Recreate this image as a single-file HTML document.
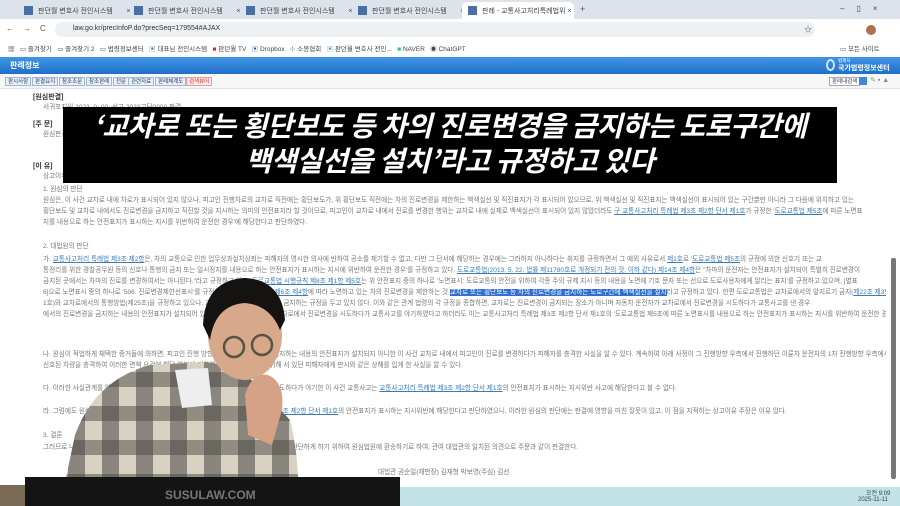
<!DOCTYPE html>
<html><head><meta charset="utf-8"><style>
*{margin:0;padding:0;box-sizing:border-box}
body{width:900px;height:506px;overflow:hidden;position:relative;background:#fff;font-family:"Liberation Sans","Noto Sans CJK KR",sans-serif}
.a{position:absolute}
.t{font-size:6.6px;color:#777;white-space:nowrap;line-height:8px}
.u{color:#3a7bb8;text-decoration:underline}
.h{font-size:7px;color:#333;font-weight:bold}
.tab{position:absolute;top:2px;height:16px;font-size:7px;color:#444;padding:4px 0 0 20px;white-space:nowrap}
.tab:before{content:"";position:absolute;left:6px;top:4px;width:9px;height:9px;background:#4a6fa5}
.bm{font-size:6.5px;color:#444;position:absolute;top:43px;white-space:nowrap}
.btn{position:absolute;top:77px;height:9px;border:1px solid #9bb8d8;background:#e8f0f9;font-size:5.5px;color:#335;padding:0 2px;line-height:8px}
#c{position:absolute;left:0;top:89px;width:886px;height:400px;overflow:hidden}
</style></head><body>
<!-- tabs -->
<div class="a" style="left:0;top:0;width:900px;height:19px;background:#dde3ea"></div>
<div class="tab" style="left:18px">판던월 변호사 전인시스템 &nbsp;&nbsp;&nbsp;&nbsp;&nbsp;&nbsp;×</div>
<div class="tab" style="left:128px">판던월 변호사 전인시스템 &nbsp;&nbsp;&nbsp;&nbsp;&nbsp;&nbsp;×</div>
<div class="tab" style="left:240px">판던월 변호사 전인시스템 &nbsp;&nbsp;&nbsp;&nbsp;&nbsp;&nbsp;×</div>
<div class="tab" style="left:352px">판던월 변호사 전인시스템 &nbsp;&nbsp;&nbsp;&nbsp;&nbsp;&nbsp;×</div>
<div class="a" style="left:462px;top:2px;width:112px;height:17px;background:#fff;border-radius:5px 5px 0 0"></div>
<div class="tab" style="left:462px">판례 - 교통사고처리특례법위 ×</div>
<div class="a" style="left:580px;top:4px;font-size:9px;color:#555">+</div>
<div class="a" style="left:840px;top:4px;font-size:8px;color:#444;letter-spacing:12px">–▯×</div>
<!-- address -->
<div class="a" style="left:0;top:19px;width:900px;height:21px;background:#fff"></div>
<div class="a" style="left:6px;top:24px;font-size:8px;color:#555;letter-spacing:9px">←→C</div>
<div class="a" style="left:55px;top:22px;width:760px;height:15px;background:#eef1f4;border-radius:8px"></div>
<div class="a" style="left:73px;top:25px;font-size:7px;color:#333">law.go.kr/precInfoP.do?precSeq=179554#AJAX</div>
<div class="a" style="left:804px;top:24px;font-size:8px;color:#555">☆</div>
<div class="a" style="left:866px;top:25px;width:10px;height:10px;border-radius:50%;background:#b07050"></div>
<!-- bookmarks -->
<div class="bm" style="left:8px">▦ &nbsp;&nbsp;▭ 즐겨찾기 &nbsp; ▭ 즐겨찾기 2 &nbsp; ▭ 법령정보센터 &nbsp; <span style="color:#4a6fa5">▣</span> 대표님 전인시스템 &nbsp; <span style="color:#d22">■</span> 판던월 TV &nbsp; <span style="color:#2a5bd7">▣</span> Dropbox &nbsp; ⊹ 소봉협회 &nbsp; <span style="color:#3a9ad9">▣</span> 판던월 변호사 전인... &nbsp; <span style="color:#2c6">■</span> NAVER &nbsp; ◉ ChatGPT</div>
<div class="bm" style="left:840px">▭ 모든 사이트</div>
<!-- blue header -->
<div class="a" style="left:0;top:57px;width:900px;height:17px;background:linear-gradient(#3f95e4,#1f6fc8)"></div>
<div class="a" style="left:10px;top:60px;font-size:8px;color:#fff;font-weight:bold">판례정보</div>
<div class="a" style="left:826px;top:59px;width:9px;height:12px;border-radius:50%;border:2px solid #cfe6ff"></div>
<div class="a" style="left:838px;top:58px;font-size:4.5px;color:#fff">법제처</div>
<div class="a" style="left:838px;top:63px;font-size:7px;color:#fff;font-weight:bold">국가법령정보센터</div>
<!-- buttons -->
<div class="a" style="left:0;top:74px;width:900px;height:15px;background:#f6f7f9;border-bottom:1px solid #e0e0e0"></div>
<div class="btn" style="left:5px">판시사항</div><div class="btn" style="left:32px">판결요지</div><div class="btn" style="left:59px">참조조문</div><div class="btn" style="left:86px">참조판례</div><div class="btn" style="left:113px">전문</div><div class="btn" style="left:128px">관련자료</div><div class="btn" style="left:155px">판례체계도</div><div class="btn" style="left:186px;border-color:#e0a0a0;background:#fdeaea;color:#c33">검색뷰어</div>
<div class="btn" style="left:829px;background:#fff;border-color:#aaa">판례내검색</div>
<div class="a" style="left:859px;top:77px;width:8px;height:8px;background:#3a8ad9"></div>
<div class="a" style="left:870px;top:76px;font-size:7px;color:#7a5">✎ <span style="color:#888">▪ ▲</span></div>
<!-- scrollbar -->
<div class="a" style="left:891px;top:258px;width:5px;height:221px;background:#777;border-radius:2px"></div>
<!-- content -->
<div id="c">
<div class="a h" style="left:33px;top:3px">[원심판결]</div>
<div class="a t" style="left:43px;top:15px">서귀포지원 2023. 0. 00. 선고 2023고단0000 판결</div>
<div class="a h" style="left:33px;top:30px">[주 문]</div>
<div class="a t" style="left:43px;top:42px">원심판결을 파기하고, 사건을 제주지방법원에 환송한다.</div>
<div class="a h" style="left:33px;top:72px">[이 유]</div>
<div class="a t" style="left:43px;top:84px">상고이유를 판단한다.</div>
<div class="a t" style="left:43px;top:97px">1. 원심의 판단</div>
<div class="a t" style="left:43px;top:108px">원심은, 이 사건 교차로 내에 차로가 표시되어 있지 않으나, 피고인 진행차로의 교차로 직전에는 횡단보도가, 위 횡단보도 직전에는 차의 진로변경을 제한하는 백색실선 및 직진표지가 각 표시되어 있으므로, 위 백색실선 및 직진표지는 백색실선이 표시되어 있는 구간뿐만 아니라 그 다음에 위치하고 있는</div>
<div class="a t" style="left:43px;top:119px">횡단보도 및 교차로 내에서도 진로변경을 금지하고 직진할 것을 지시하는 의미의 안전표지라 할 것이므로, 피고인이 교차로 내에서 진로를 변경한 행위는 교차로 내에 실제로 백색실선이 표시되어 있지 않았더라도 <span class="u">구 교통사고처리 특례법 제3조 제2항 단서 제1호</span>가 규정한 '<span class="u">도로교통법 제5조</span>에 따른 노면표</div>
<div class="a t" style="left:43px;top:130px">지를 내용으로 하는 안전표지가 표시하는 지시를 위반하여 운전한 경우'에 해당한다고 판단하였다.</div>
<div class="a t" style="left:43px;top:154px">2. 대법원의 판단</div>
<div class="a t" style="left:43px;top:167px">가. <span class="u">교통사고처리 특례법 제3조 제2항</span>은, 차의 교통으로 인한 업무상과실치상죄는 피해자의 명시한 의사에 반하여 공소를 제기할 수 없고, 다만 그 단서에 해당하는 경우에는 그러하지 아니하다는 취지를 규정하면서 그 예외 사유로서 <span class="u">제1호</span>로 '<span class="u">도로교통법 제5조</span>의 규정에 의한 신호기 또는 교</div>
<div class="a t" style="left:43px;top:178px">통정리를 위한 경찰공무원 등의 신호나 통행의 금지 또는 일시정지를 내용으로 하는 안전표지가 표시하는 지시에 위반하여 운전한 경우'를 규정하고 있다. <span class="u">도로교통법(2013. 5. 22. 법률 제11780호로 개정되기 전의 것, 이하 같다) 제14조 제4항</span>은 "차마의 운전자는 안전표지가 설치되어 특별히 진로변경이</div>
<div class="a t" style="left:43px;top:189px">금지된 곳에서는 차마의 진로를 변경하여서는 아니된다."라고 규정하고 있고, <span class="u">도로교통법 시행규칙 제8조 제1항 제5호</span>는 위 안전표지 중의 하나로 '노면표시: 도로교통의 안전을 위하여 각종 주의 규제 지시 등의 내용을 노면에 기호 문자 또는 선으로 도로사용자에게 알리는 표지'를 규정하고 있으며, [별표</div>
<div class="a t" style="left:43px;top:200px">6]으로 노면표시 중의 하나로 '506. 진로변경제한선표시'를 규정하면서 그 설치기준을 <span class="u">제6조 제4항</span>에 따라 노면하고 있는 차의 진로변경을 제한하는 것 <span style="background:#2f6fd0;color:#fff">교차로 또는 횡단보도 등 차의 진로변경을 금지하는 도로구간에 백색실선을 설치</span>라고 규정하고 있다. 한편 도로교통법은 교차로에서의 앞지르기 금지(<span class="u">제22조 제3항</span></div>
<div class="a t" style="left:43px;top:211px">1호)와 교차로에서의 통행방법(제25조)을 규정하고 있으나, 교차로 내에서의 진로변경을 금지하는 규정을 두고 있지 않다. 이와 같은 관계 법령의 각 규정을 종합하면, 교차로는 진로변경이 금지되는 장소가 아니며 자동차 운전자가 교차로에서 진로변경을 시도하다가 교통사고를 낸 경우</div>
<div class="a t" style="left:43px;top:222px">에서의 진로변경을 금지하는 내용의 안전표지가 설치되어 있지 않은 이상 운전자가 그 교차로에서 진로변경을 시도하다가 교통사고를 야기하였다고 하더라도 이는 교통사고처리 특례법 제3조 제2항 단서 제1호의 '도로교통법 제5조에 따른 노면표시를 내용으로 하는 안전표지가 표시하는 지시를 위반하여 운전한 경우'에 해당한다고 할 수 없다.</div>
<div class="a t" style="left:43px;top:262px">나. 원심이 적법하게 채택한 증거들에 의하면, 피고인 진행 방향 교차로에 진로변경을 금지하는 내용의 안전표지가 설치되지 아니한 이 사건 교차로 내에서 피고인이 진로를 변경하다가 피해자를 충격한 사실을 알 수 있다. 계속하여 아래 사정이 그 진행방향 우측에서 진행하던 이륜차 운전자의 1차 진행방향 우측에서 진행하던</div>
<div class="a t" style="left:43px;top:273px">신호된 차량을 충격하여 이러한 면책 요건에 해당 여부에 대하여 횡단보도를 건너기 위해 서 있던 피해자에게 판시와 같은 상해를 입게 한 사실을 알 수 있다.</div>
<div class="a t" style="left:43px;top:296px">다. 이러한 사실관계를 앞서 본 법리에 비추어 보면, 피고인이 교차로에서 진로변경을 시도하다가 야기한 이 사건 교통사고는 <span class="u">교통사고처리 특례법 제3조 제2항 단서 제1호</span>의 안전표지가 표시하는 지시위반 사고에 해당한다고 볼 수 없다.</div>
<div class="a t" style="left:43px;top:319px">라. 그럼에도 원심은 이 사건 교차로 내에서 진로변경을 한 것이 <span class="u">교통사고처리 특례법 제3조 제2항 단서 제1호</span>의 안전표지가 표시하는 지시위반에 해당한다고 판단하였으니, 이러한 원심의 판단에는 판결에 영향을 미친 잘못이 있고, 이 점을 지적하는 상고이유 주장은 이유 있다.</div>
<div class="a t" style="left:43px;top:343px">3. 결론</div>
<div class="a t" style="left:43px;top:355px">그러므로 나머지 상고이유에 대한 판단을 생략한 채 원심판결을 파기하고, 사건을 다시 심리·판단하게 하기 위하여 원심법원에 환송하기로 하여, 관여 대법관의 일치된 의견으로 주문과 같이 판결한다.</div>
<div class="a t" style="left:378px;top:380px">대법관 권순일(재판장) 김재형 박보영(주심) 김선</div>
</div>
<!-- caption -->
<div class="a" style="left:63px;top:107px;width:774px;height:76px;background:#000"></div>
<div class="a" style="left:63px;top:108px;width:774px;text-align:center;color:#fff;font-weight:bold;font-size:28px;line-height:35px;font-style:italic;font-family:'Noto Sans CJK KR',sans-serif;letter-spacing:-0.3px;white-space:nowrap">‘교차로 또는 횡단보도 등 차의 진로변경을 금지하는 도로구간에<br>백색실선을 설치’라고 규정하고 있다</div>
<!-- person -->
<svg class="a" style="left:0;top:270px" width="420" height="236" viewBox="0 0 420 236">
<defs><pattern id="pl" width="34" height="34" patternUnits="userSpaceOnUse"><rect width="34" height="34" fill="#d9d2c2"/><rect width="17" height="34" fill="#6a6660" opacity=".7"/><rect width="34" height="15" fill="#4a4744" opacity=".5"/></pattern></defs>
<path d="M60 236 L75 165 Q95 110 150 95 L205 92 Q240 95 262 120 L290 150 Q300 190 298 236 Z" fill="url(#pl)"/>
<path d="M175 100 L208 98 L212 135 L182 138 Z" fill="#eee"/>
<ellipse cx="245" cy="65" rx="37" ry="45" fill="#d8a88a"/>
<path d="M203 55 Q205 10 245 8 Q282 10 285 50 L280 60 Q270 35 245 33 Q215 35 210 70 Z" fill="#151312"/>
<circle cx="234" cy="77" r="10" fill="none" stroke="#554" stroke-width="2.5"/><circle cx="262" cy="75" r="10" fill="none" stroke="#554" stroke-width="2.5"/>
<path d="M245 125 Q252 102 268 105 Q285 112 282 140 L272 175 L248 165 Z" fill="#d6a286"/>
<rect x="25" y="207" width="375" height="29" fill="#141414"/>
<rect x="0" y="215" width="25" height="21" fill="#7a6a55"/>
<text x="165" y="229" font-size="12" font-weight="bold" fill="#777" font-family="Liberation Sans,sans-serif">SUSULAW.COM</text>
</svg>
<!-- taskbar -->
<div class="a" style="left:400px;top:487px;width:500px;height:19px;background:#c3e2e8"></div>
<div class="a" style="left:866px;top:488px;font-size:6px;color:#345">오전 9:09</div>
<div class="a" style="left:858px;top:497px;font-size:6px;color:#345">2025-11-11</div>
</body></html>
